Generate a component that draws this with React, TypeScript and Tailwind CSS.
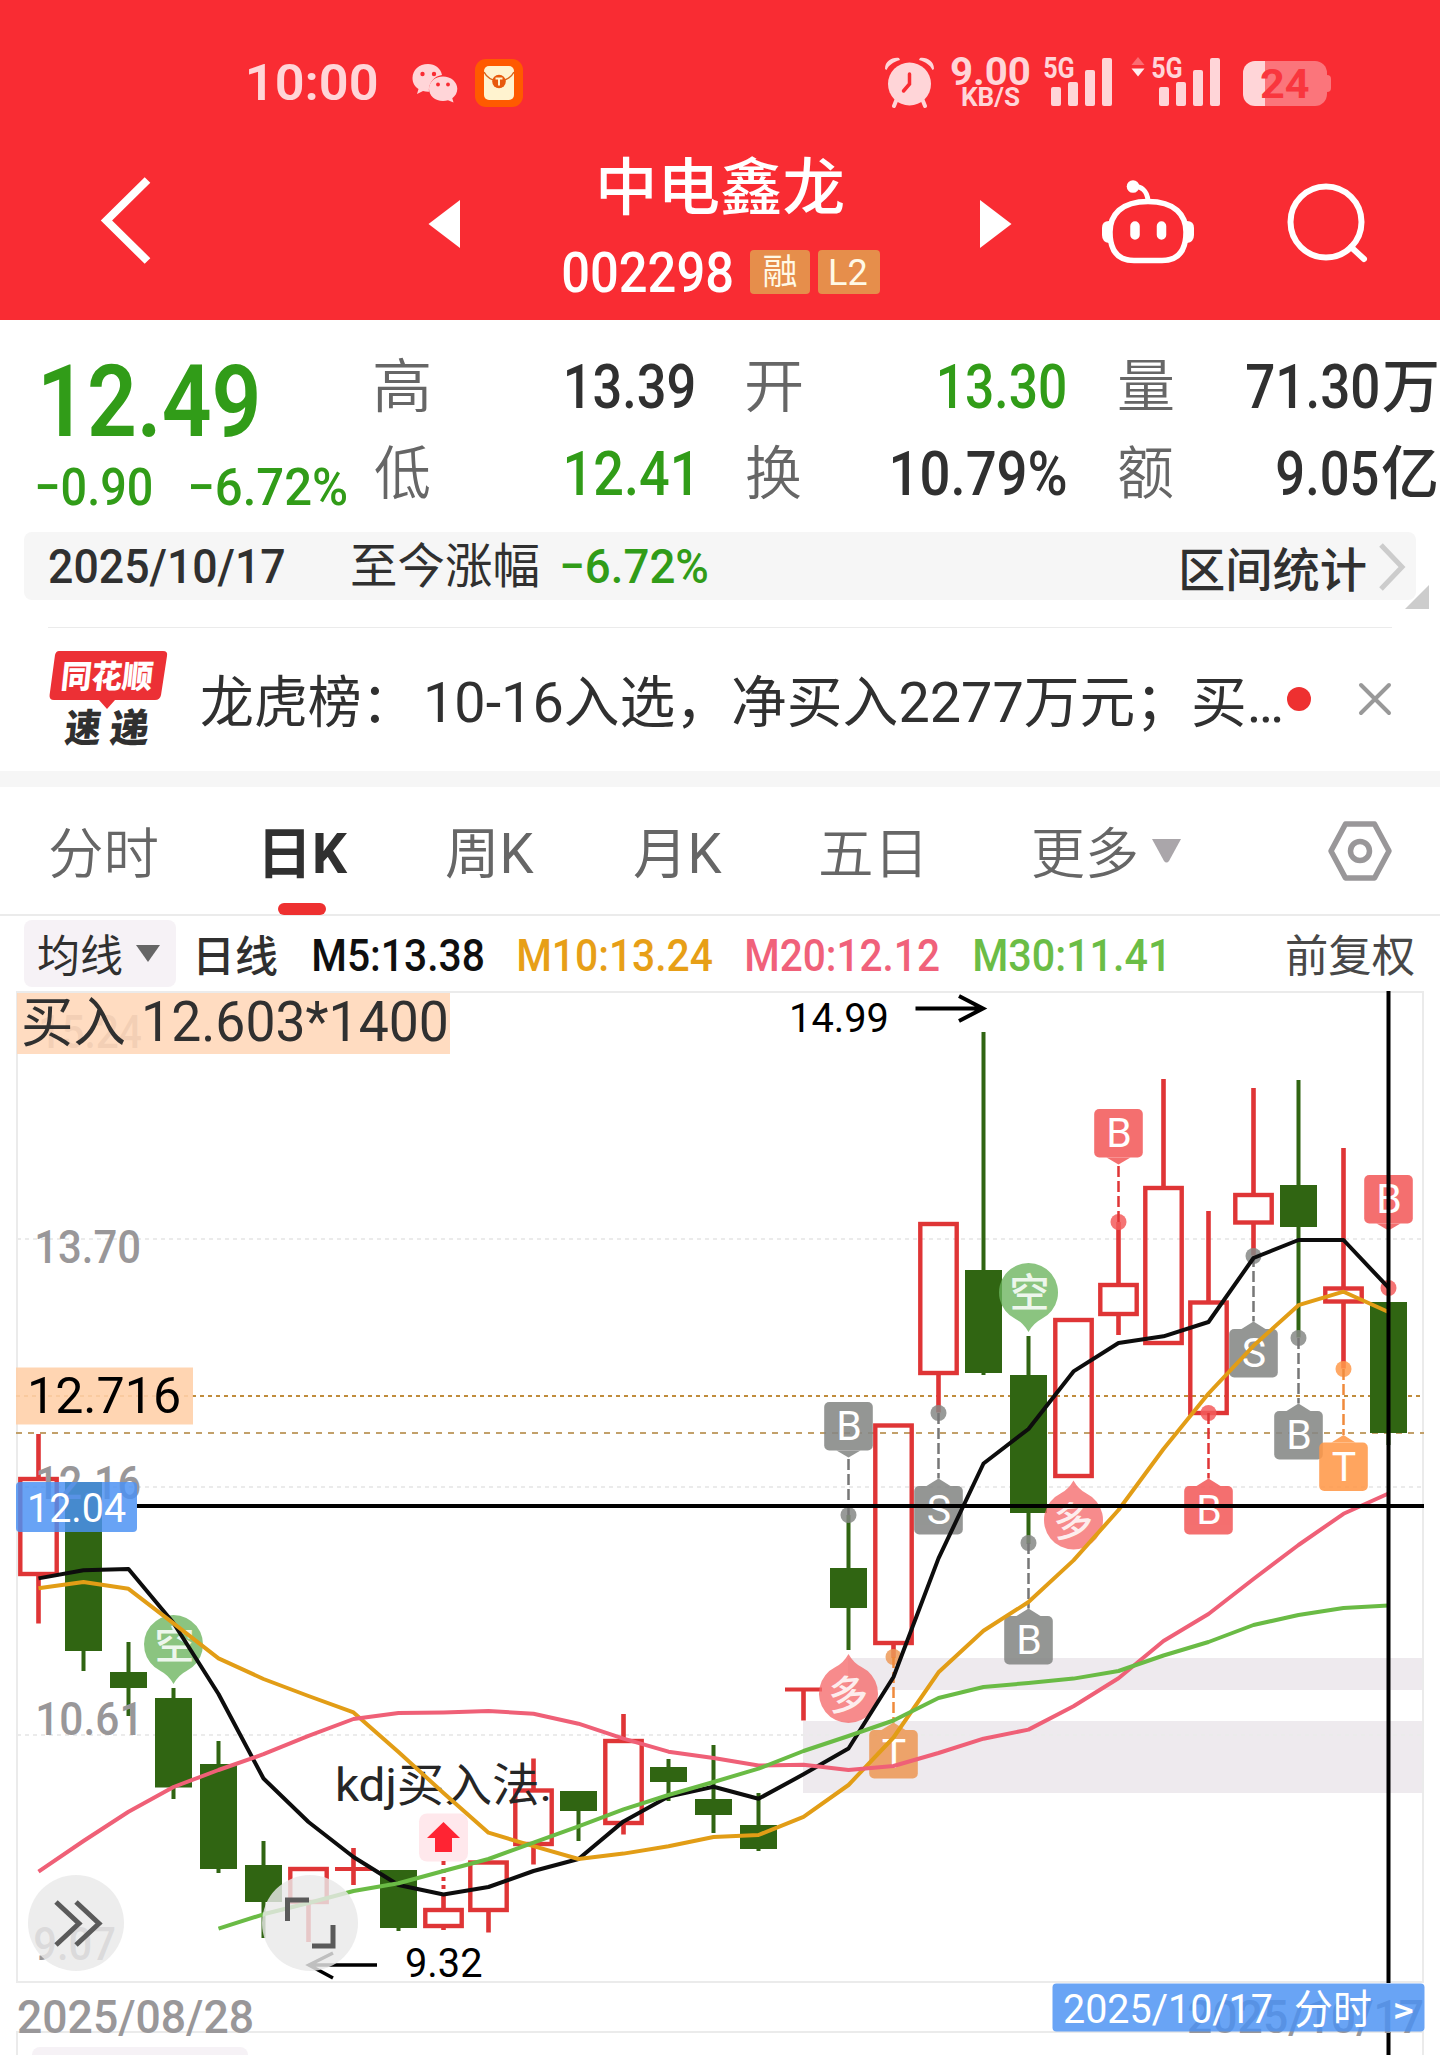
import type { ReactNode } from 'react';

const FAMILY = 'Roboto, "Noto Sans CJK SC", sans-serif';
const ctx = document.createElement('canvas').getContext('2d')!;

/* Ink extents of a run of text: distance from the origin to its left and right edges. */
function ink(text: string, size: number, weight: number) {
  ctx.font = `${weight} ${size}px ${FAMILY}`;
  const m = ctx.measureText(text);
  return { left: m.actualBoundingBoxLeft, width: m.actualBoundingBoxLeft + m.actualBoundingBoxRight };
}

/* A run of text whose ink is condensed to exactly `w` pixels. */
function Fit({ t, w, size, weight = 400, className = '' }: { t: string; w: number; size: number; weight?: number; className?: string }) {
  const m = ink(t, size, weight);
  const s = w / m.width;
  return (
    <span className={`block shrink-0 whitespace-nowrap leading-none ${className}`} style={{ width: w, fontSize: size, fontWeight: weight }}>
      <span className="inline-block origin-left whitespace-pre align-top" style={{ transform: `translateX(${m.left * s}px) scaleX(${s})` }}>
        {t}
      </span>
    </span>
  );
}

/* The same for labels inside the chart; (x, y) is the ink's left edge and the baseline. */
function Label({ t, x, y, w, size, weight = 400, fill, opacity = 1 }: { t: string; x: number; y: number; w: number; size: number; weight?: number; fill: string; opacity?: number }) {
  const m = ink(t, size, weight);
  const s = w / m.width;
  return (
    <text transform={`translate(${x + m.left * s} ${y}) scale(${s} 1)`} fontSize={size} fontWeight={weight} fill={fill} opacity={opacity} fontFamily={FAMILY} style={{ whiteSpace: 'pre' }}>
      {t}
    </text>
  );
}

function Bars() {
  return (
    <svg className="ml-[7px] mt-[1px] block" width="61" height="48" viewBox="0 0 61 48" fill="#ffd5d8">
      <rect x="0" y="29" width="10" height="19" rx="2" />
      <rect x="17" y="24" width="10" height="24" rx="2" />
      <rect x="34" y="12" width="10" height="36" rx="2" />
      <rect x="51" y="0" width="10" height="48" rx="2" />
    </svg>
  );
}

function Signal() {
  return (
    <div className="relative h-[50px] w-[69px]">
      <div className="absolute left-0 top-[-4px]">
        <Fit t="5G" w={30} size={29} weight={700} />
      </div>
      <Bars />
    </div>
  );
}

function StatusBar() {
  return (
    <div className="flex h-[127px] items-start pt-[57px] text-[#ffd5d8]">
      <Fit t="10:00" w={128} size={50} weight={600} className="ml-[249px] mt-[1px]" />
      <svg className="ml-[35px] mt-[6px] block" width="46" height="40" viewBox="0 0 46 40">
        <path d="M16 1C7 1 .5 7 .5 15c0 5 2.300 8.500 6 11l-1.500 5 6-3c2 .6 4 .8 6 .7A15 15 0 0 1 30 12C29 5.500 23 1 16 1Z" fill="#ffd5d8" />
        <path d="M31 13.500c-8 0-14 5.500-14 12.200 0 6.900 6 12.300 14 12.300 1.700 0 3.500-.3 5-.8l5.500 2.300-1.200-4.300c3-2.300 5-5.500 5-9.500 0-6.700-6.300-12.200-14.300-12.200Z" fill="#ffd5d8" />
        <g fill="#f92c33"><circle cx="10.500" cy="11" r="2.200" /><circle cx="22" cy="11" r="2.200" /><circle cx="26" cy="21.500" r="1.900" /><circle cx="36" cy="21.500" r="1.900" /></g>
      </svg>
      <svg className="ml-[17px] mt-[2px] block" width="48" height="48" viewBox="0 0 48 48">
        <rect width="48" height="48" rx="11" fill="#ff5a00" />
        <rect x="9" y="7" width="30" height="34" rx="5" fill="#fff3cf" />
        <path d="M9 13Q13 21 24 22.500Q35 21 39 13" fill="none" stroke="#d9641a" strokeWidth="1.500" />
        <circle cx="24" cy="22.500" r="6.800" fill="#e8590c" />
        <path d="M20.500 19.500h7M24 19.500v7" stroke="#fff3cf" strokeWidth="2" />
      </svg>
      <svg className="ml-[362px] block" width="49" height="51" viewBox="0 0 49 51">
        <circle cx="24.500" cy="27" r="21.500" fill="#ffd5d8" />
        <path d="M0 12C0 4 7 0 14 1L15 3C8 5 4 8 1.500 13ZM49 12C49 4 42 0 35 1L34 3C41 5 45 8 47.500 13Z" fill="#ffd5d8" />
        <path d="M11 44L9 49M38 44L40 49" stroke="#ffd5d8" strokeWidth="4" strokeLinecap="round" />
        <path d="M24.500 17V27L18.500 34" fill="none" stroke="#f92c33" strokeWidth="3.500" strokeLinecap="round" />
      </svg>
      <div className="-mt-[4px] ml-[17px] flex w-[79px] flex-col items-center">
        <Fit t="9.00" w={79} size={38} weight={700} />
        <Fit t="KB/S" w={58} size={26} weight={700} className="-mt-[7px]" />
      </div>
      <div className="ml-[14px]"><Signal /></div>
      <svg className="ml-[18px] block" width="14" height="20" viewBox="0 0 14 20">
        <path d="M7 0L13.500 8H.5Z" fill="#fb6c72" />
        <path d="M7 19.500L.5 11.500h13Z" fill="#fff0f0" />
      </svg>
      <div className="ml-[7px]"><Signal /></div>
      <div className="relative ml-[22px] mt-[4px] flex h-[45px] w-[90px] items-start">
        <div className="h-full w-[22px] rounded-l-[12px] bg-[#ffd5d8]" />
        <div className="h-full w-[62px] rounded-r-[12px] bg-[#fb757b]" />
        <div className="mt-[14px] h-[17px] w-[4px] shrink-0 rounded-r-[4px] bg-[#fb757b]" />
        <div className="absolute left-[18px] top-[3px] text-[#f9363e]">
          <Fit t="24" w={48} size={41} weight={700} />
        </div>
      </div>
    </div>
  );
}

function Header() {
  return (
    <header className="h-[320px] bg-[#f92c33]">
      <StatusBar />
      <div className="flex h-[193px] items-start text-white">
        <svg className="ml-[100px] mt-[48px] block" width="54" height="92" viewBox="0 0 54 92">
          <path d="M47.500 5L6.500 45.500L47.500 86" fill="none" stroke="#fff" strokeWidth="8" />
        </svg>
        <svg className="ml-[274px] mt-[73px] block" width="32" height="48"><path d="M32 0V48L.5 24Z" fill="#fff" /></svg>
        <div className="ml-[101px] flex w-[319px] flex-col pt-[31px]">
          <Fit t="中电鑫龙" w={243} size={62} weight={500} className="ml-[39px]" />
          <div className="mt-[26px] flex items-start">
            <Fit t="002298" w={169} size={55} weight={500} className="ml-[2px]" />
            <div className="ml-[18px] mt-[4px] flex h-[44px] w-[60px] items-center justify-center rounded-[4px] bg-[#e68e4b] text-[#fff9e6]">
              <Fit t="融" w={33} size={35} />
            </div>
            <div className="ml-[8px] mt-[4px] flex h-[44px] w-[62px] items-center justify-center rounded-[4px] bg-[#e68e4b] text-[#fff9e6]">
              <Fit t="L2" w={36} size={37} />
            </div>
          </div>
        </div>
        <svg className="ml-[100px] mt-[73px] block" width="32" height="48"><path d="M0 0V48L31.500 24Z" fill="#fff" /></svg>
        <svg className="ml-[88px] mt-[51px] block" width="96" height="88" viewBox="0 0 96 88" fill="none" stroke="#fff">
          <path d="M32 9C41 7 47.500 13 48 23" strokeWidth="5" />
          <circle cx="33" cy="8.500" r="6.300" fill="#fff" stroke="none" />
          <path d="M48 23.500C75 23.500 86 37 86 54C86 74 77 82.500 62 82.500H34C19 82.500 10 74 10 54C10 37 21 23.500 48 23.500Z" strokeWidth="5.500" />
          <path d="M9 43q-7 0-7 7v7q0 7 7 8ZM87 43q7 0 7 7v7q0 7-7 8Z" fill="#fff" stroke="none" />
          <path d="M35 48v9M61.500 48v9" strokeWidth="9.500" strokeLinecap="round" />
        </svg>
        <svg className="ml-[88px] mt-[55px] block" width="84" height="84" viewBox="0 0 84 84" fill="none" stroke="#fff" strokeWidth="6">
          <circle cx="42" cy="40" r="35.500" />
          <path d="M67 65L80 77" strokeLinecap="round" />
        </svg>
      </div>
    </header>
  );
}

function Quote() {
  return (
    <section className="flex h-[212px] items-start">
      <div className="w-[373px] pt-[32px] text-[#319c18]">
        <Fit t="12.49" w={213} size={100} weight={600} className="ml-[44px]" />
        <div className="mt-[10px] flex">
          <Fit t="−0.90" w={114} size={52} weight={500} className="ml-[37px]" />
          <Fit t="−6.72%" w={156} size={52} weight={500} className="ml-[39px]" />
        </div>
      </div>
      <div className="grid grid-cols-[372px_372px_323px] grid-rows-[87px_87px] pt-[24px] text-[#303030]">
        <div className="flex h-[86px] items-center">
          <Fit t="高" w={54} size={58} weight={350} className="ml-[2px] text-[#666]" />
          <Fit t="13.39" w={127} size={61} weight={500} className="ml-[138px]" />
        </div>
        <div className="flex h-[86px] items-center">
          <Fit t="开" w={54} size={58} weight={350} className="ml-[2px] text-[#666]" />
          <Fit t="13.30" w={125} size={61} weight={500} className="ml-[139px] text-[#319c18]" />
        </div>
        <div className="flex h-[86px] items-center">
          <Fit t="量" w={54} size={58} weight={350} className="ml-[2px] text-[#666]" />
          <Fit t="71.30" w={131} size={61} weight={500} className="ml-[74px]" />
          <Fit t="万" w={54} size={58} weight={450} className="ml-[5px]" />
        </div>
        <div className="flex h-[86px] items-center">
          <Fit t="低" w={54} size={58} weight={350} className="ml-[2px] text-[#666]" />
          <Fit t="12.41" w={123} size={61} weight={500} className="ml-[138px] text-[#319c18]" />
        </div>
        <div className="flex h-[86px] items-center">
          <Fit t="换" w={54} size={58} weight={350} className="ml-[2px] text-[#666]" />
          <Fit t="10.79%" w={173} size={61} weight={500} className="ml-[92px]" />
        </div>
        <div className="flex h-[86px] items-center">
          <Fit t="额" w={54} size={58} weight={350} className="ml-[2px] text-[#666]" />
          <Fit t="9.05" w={101} size={61} weight={500} className="ml-[104px]" />
          <Fit t="亿" w={54} size={58} weight={450} className="ml-[4px]" />
        </div>
      </div>
    </section>
  );
}

function RangeBar() {
  return (
    <section className="relative mx-[24px] flex h-[68px] items-center rounded-[8px] bg-[#f6f6f6] text-[#303030]">
      <Fit t="2025/10/17" w={235} size={49} weight={500} className="ml-[25px]" />
      <Fit t="至今涨幅" w={186} size={48} className="ml-[68px] mt-[1px]" />
      <Fit t="−6.72%" w={145} size={49} weight={500} className="ml-[24px] text-[#319c18]" />
      <Fit t="区间统计" w={184} size={47} weight={450} className="ml-[475px] mt-[8px]" />
      <svg className="ml-[12px] mt-[2px] block" width="28" height="50" viewBox="0 0 28 50"><path d="M3 3L24 25L3 47" fill="none" stroke="#ccc" strokeWidth="5" /></svg>
      <svg className="absolute -bottom-[9px] -right-[13px]" width="24" height="24"><path d="M24 0V24H0Z" fill="#ccc" /></svg>
    </section>
  );
}

function News() {
  return (
    <section className="mx-[48px] mt-[27px] flex h-[144px] items-start border-t border-[#ebebeb]">
      <div className="relative ml-[1px] mt-[23px] h-[100px] w-[120px]">
        <svg className="absolute left-0 top-0" width="120" height="60" viewBox="0 0 120 60">
          <path d="M10 0H114Q119 0 118 5L112 44Q111 49 106 49H66L58 58L50 49H5Q0 49 .6 44L6 4Q7 0 10 0Z" fill="#ec3035" />
        </svg>
        <div className="absolute left-[14px] top-[10px] -skew-x-6 text-white"><Fit t="同花顺" w={89} size={32} weight={900} /></div>
        <div className="absolute left-[16px] top-[59px] -skew-x-6 text-[#303030]"><Fit t="速" w={36} size={39} weight={900} /></div>
        <div className="absolute left-[61px] top-[59px] -skew-x-6 text-[#303030]"><Fit t="递" w={39} size={39} weight={900} /></div>
      </div>
      <Fit t="龙虎榜：" w={179} size={55.5} className="ml-[33px] mt-[48px] text-[#303030]" />
      <Fit t="10-16入选，净买入2277万元；买…" w={854} size={55.5} className="ml-[47px] mt-[48px] text-[#303030]" />
      <div className="ml-[6px] mt-[59px] size-[24px] shrink-0 rounded-full bg-[#ee3030]" />
      <svg className="ml-[47px] mt-[54px] block shrink-0" width="34" height="34"><path d="M3 3L31 31M31 3L3 31" stroke="#999" strokeWidth="4" strokeLinecap="round" /></svg>
    </section>
  );
}

function Tabs() {
  return (
    <nav className="flex h-[129px] items-start border-b-2 border-[#ebebeb] pt-[40px] text-[#666]">
      <Fit t="分时" w={107} size={55} weight={350} className="ml-[50px]" />
      <div className="ml-[108px] w-[83px]">
        <Fit t="日K" w={83} size={55} weight={700} className="text-[#303030]" />
        <div className="ml-[13px] mt-[21px] h-[12px] w-[48px] rounded-full bg-[#ee3030]" />
      </div>
      <Fit t="周K" w={88} size={55} weight={400} className="ml-[98px]" />
      <Fit t="月K" w={88} size={55} weight={400} className="ml-[100px]" />
      <Fit t="五日" w={99} size={55} weight={350} className="ml-[99px]" />
      <Fit t="更多" w={103} size={55} weight={350} className="ml-[113px]" />
      <svg className="ml-[16px] mt-[12px] block" width="29" height="24"><path d="M0 0H29L17 22Q14.500 25 12 22Z" fill="#aaa6aa" /></svg>
      <svg className="ml-[146px] -mt-[7px] block" width="66" height="62" viewBox="0 0 66 62" fill="none" stroke="#999799" strokeLinejoin="round">
        <path d="M18.500 4H47.500L62 31L47.500 58H18.500L4 31Z" strokeWidth="5.500" />
        <circle cx="33" cy="31" r="9.500" strokeWidth="5.500" />
      </svg>
    </nav>
  );
}

function Averages() {
  return (
    <section className="flex h-[75px] items-center pb-[1px]">
      <div className="ml-[24px] flex h-[67px] w-[152px] items-center rounded-[8px] bg-[#f6f2f6] text-[#303030]">
        <Fit t="均线" w={84} size={44} className="ml-[14px] mt-[8px]" />
        <svg className="ml-[14px] block" width="24" height="17"><path d="M0 0H24L12 17Z" fill="#666" /></svg>
      </div>
      <Fit t="日线" w={78} size={43} weight={450} className="ml-[23px] mt-[8px] text-[#303030]" />
      <Fit t="M5:13.38" w={169} size={44} weight={500} className="ml-[37px] mt-[6px] text-[#0f0f0f]" />
      <Fit t="M10:13.24" w={193} size={44} weight={500} className="ml-[36px] mt-[6px] text-[#e79f17]" />
      <Fit t="M20:12.12" w={192} size={44} weight={500} className="ml-[35px] mt-[6px] text-[#f0617a]" />
      <Fit t="M30:11.41" w={189} size={44} weight={500} className="ml-[36px] mt-[6px] text-[#6bbd46]" />
      <Fit t="前复权" w={127} size={44} className="ml-[123px] mt-[8px] text-[#484848]" />
    </section>
  );
}

const cx = (i: number) => 38.5 + 45 * i;

/* [colour, wick top, body top, body bottom, wick bottom] */
type Candle = ['r' | 'g', number, number, number, number];
const candles: Candle[] = [
  ['r', 1434, 1477, 1576, 1623.5], ['g', 1482, 1482, 1651, 1671], ['g', 1642, 1672, 1688, 1716], ['g', 1688, 1698, 1787.5, 1799],
  ['g', 1741, 1764, 1869, 1873], ['g', 1841, 1865, 1902, 1938], ['r', 1867, 1867, 1904, 1942], ['r', 1848, 1867, 1871, 1885],
  ['g', 1870, 1870, 1928, 1931], ['r', 1894, 1908, 1928, 1930], ['r', 1860.5, 1860.5, 1912, 1932.5], ['r', 1758.5, 1788.5, 1846, 1864.5],
  ['g', 1791, 1791, 1811, 1841], ['r', 1714, 1739, 1825, 1834.5], ['g', 1759, 1767, 1782, 1801], ['g', 1745, 1799, 1815, 1833],
  ['g', 1793, 1825, 1849, 1851], ['r', 1687.5, 1687.5, 1691.5, 1720.5], ['g', 1515, 1568, 1608, 1650], ['r', 1423.5, 1423.5, 1645, 1658],
  ['r', 1222, 1222, 1375, 1412.5], ['g', 1032, 1270, 1373, 1375], ['g', 1336, 1375, 1513, 1544], ['r', 1318, 1318, 1478, 1478],
  ['r', 1222, 1283, 1316, 1335], ['r', 1079, 1186, 1345, 1345], ['r', 1211, 1300.5, 1415, 1415], ['r', 1088, 1193, 1224.5, 1255.5],
  ['g', 1080, 1185, 1227, 1337.5], ['r', 1148, 1286.5, 1303.5, 1368.5], ['g', 1302, 1302, 1433, 1445],
];

const ma5 = [1578.4, 1570.3, 1569, 1623, 1694, 1778.5, 1822, 1857, 1885, 1894.5, 1887, 1871, 1859, 1821.4, 1796.6, 1786.7, 1798.8, 1774.3, 1748.5, 1677, 1558.4, 1463.5, 1429, 1371.4, 1343, 1336.3, 1322, 1258, 1240, 1240, 1287.7];
const ma10 = [1588.3, 1582, 1588.8, 1623.4, 1658.4, 1679, 1696, 1712.4, 1752, 1793, 1832.7, 1846.2, 1859, 1853.6, 1846.2, 1837, 1835, 1816.8, 1785, 1737.5, 1672.3, 1630.8, 1602, 1560.4, 1510, 1449, 1393.5, 1345.8, 1305.2, 1291.7, 1312];
const ma20 = [1871.6, 1841, 1811.8, 1787, 1770, 1754.2, 1735.8, 1719, 1713, 1712.4, 1711, 1713.8, 1723.7, 1738.6, 1751.7, 1758, 1765.5, 1764.8, 1770, 1766, 1753, 1738.7, 1729.6, 1706.3, 1678.2, 1641, 1614, 1579, 1545, 1513.8, 1493.5];
const ma30 = [1928.7, 1914.3, 1903, 1891, 1883.3, 1871, 1859, 1842.7, 1826.4, 1809.4, 1795, 1782, 1768.7, 1751, 1736, 1720.5, 1698, 1687, 1683, 1678.6, 1671, 1655.5, 1642, 1625, 1615, 1608, 1605.5];

function Line({ data, color, from = 0 }: { data: number[]; color: string; from?: number }) {
  return <polyline points={data.map((y, i) => `${cx(i + from)},${y}`).join(' ')} fill="none" stroke={color} strokeWidth="4" strokeLinejoin="round" />;
}

function CandleMark({ c, i }: { c: Candle; i: number }) {
  const [k, hi, top, bot, lo] = c;
  const x = cx(i);
  if (k === 'g') {
    return (
      <g fill="#306512">
        <rect x={x - 2} y={hi} width="4" height={lo - hi} />
        <rect x={x - 18.5} y={top} width="37" height={bot - top} />
      </g>
    );
  }
  const flat = bot - top < 5;
  return (
    <g fill="#df3536">
      {hi < top && <rect x={x - 2.3} y={hi} width="4.600" height={top - hi + 1} />}
      {lo > bot && <rect x={x - 2.3} y={bot - 1} width="4.600" height={lo - bot + 1} />}
      {flat ? (
        <rect x={x - 18.5} y={top} width="37" height="4" />
      ) : (
        <rect x={x - 18.2} y={top + 2} width="36.400" height={bot - top - 4} fill="none" stroke="#df3536" strokeWidth="4.400" />
      )}
    </g>
  );
}

/* Trade badges, tied by a dashed leader to a dot on the candle; a badge hangs above or below its dot. */
function Badge({ i, dot, box, t, color, line }: { i: number; dot: number; box: number; t: string; color: string; line: string }) {
  const x = cx(i);
  const up = box < dot;
  const near = up ? box + 48.5 : box;
  const tip = up ? near + 7 : near - 7.5;
  return (
    <g>
      <circle cx={x} cy={dot} r="8" fill={color} opacity=".85" />
      <line x1={x} x2={x} y1={dot} y2={tip} stroke={line} strokeWidth="2.500" strokeDasharray="11 4" />
      <g fill={color} opacity=".88">
        <rect x={x - 24.3} y={box} width="48.600" height="48.500" rx="5" />
        <path d={`M${x - 12} ${near}L${x} ${tip}L${x + 12} ${near}Z`} />
      </g>
      <text x={x + 0.5} y={box + 38} fontSize="41" fill="#fff" textAnchor="middle" fontFamily={FAMILY}>{t}</text>
    </g>
  );
}

function Balloon({ i, y, t }: { i: number; y: number; t: '多' | '空' }) {
  const x = cx(i);
  const down = t === '空';
  const d = down ? 1 : -1;
  return (
    <g>
      <path
        d={`M${x - 13} ${y + 26 * d}A29.500 29.500 0 1 ${down ? 1 : 0} ${x + 13} ${y + 26 * d}Q${x + 5} ${y + 30 * d} ${x} ${y + 39 * d}Q${x - 5} ${y + 30 * d} ${x - 13} ${y + 26 * d}Z`}
        fill={down ? '#6ab35c' : '#f56a6c'}
        opacity=".78"
      />
      <text transform={`translate(${x + 1} ${y + (down ? 14 : 16)}) rotate(${down ? 0 : -5})`} fontSize="40" fontWeight="500" fill="#fff" opacity=".85" textAnchor="middle" fontFamily={FAMILY}>{t}</text>
    </g>
  );
}

function Chart() {
  return (
    <svg className="block" width="1440" height="1064" viewBox="0 991 1440 1064">
      <g fill="#eeeaee">
        <rect x="848" y="1658" width="576" height="32" />
        <rect x="803" y="1721" width="621" height="72" />
      </g>
      <g fill="none" stroke="#ebebeb" strokeWidth="2">
        <path d="M17 992H1423V1982H17ZM17 2055V2032H1423V2055" />
        <path d="M17 1239H1423M17 1487H1423M17 1735H1423" strokeDasharray="4 4" />
      </g>
      <rect x="32" y="2047" width="216" height="20" rx="8" fill="#f6f2f6" />
      <path d="M16 1396H1420" stroke="#c08c3c" strokeWidth="2" strokeDasharray="4 4" />
      <path d="M16 1433H1424" stroke="#c2a06a" strokeWidth="2" strokeDasharray="6 6" />

      {candles.map((c, i) => <CandleMark key={i} c={c} i={i} />)}

      <Label t="15.24" x={41} y={1048} w={100} size={46} weight={500} fill="#999799" />
      <Label t="13.70" x={37} y={1263} w={102} size={46} weight={500} fill="#999799" />
      <Label t="12.16" x={38} y={1498.5} w={102} size={46} weight={500} fill="#999799" />
      <Label t="10.61" x={38} y={1735} w={98} size={46} weight={500} fill="#999799" />
      <Label t="9.07" x={35} y={1960} w={80} size={46} weight={500} fill="#999799" />

      <Balloon i={3} y={1645} t="空" />
      <Balloon i={22} y={1293} t="空" />
      <Balloon i={18} y={1693} t="多" />
      <Balloon i={23} y={1519.5} t="多" />

      <Badge i={24} dot={1222} box={1109} t="B" color="#f35c5c" line="#df3536" />
      <Badge i={30} dot={1288} box={1175} t="B" color="#f35c5c" line="#df3536" />
      <Badge i={18} dot={1515} box={1402} t="B" color="#868886" line="#777" />
      <Badge i={20} dot={1413} box={1486} t="S" color="#868886" line="#777" />
      <Badge i={22} dot={1543} box={1616} t="B" color="#868886" line="#777" />
      <Badge i={27} dot={1256} box={1329} t="S" color="#868886" line="#777" />
      <Badge i={28} dot={1338} box={1411} t="B" color="#868886" line="#777" />
      <Badge i={29} dot={1369} box={1442.5} t="T" color="#ff994a" line="#f08a3c" />
      <Badge i={26} dot={1413} box={1486} t="B" color="#f35c5c" line="#df3536" />
      <Badge i={19} dot={1657} box={1730} t="T" color="#ed9a58" line="#f08a3c" />

      <Label t="kdj买入法." x={338} y={1801} w={211} size={46} fill="#262626" />
      <rect x="419" y="1813.500" width="49" height="48" rx="8" fill="#ffe8ec" />
      <path d="M443.500 1822L460 1838H452V1852H435V1838H427Z" fill="#ff2433" />
      <path d="M443.500 1861V1894" stroke="#df3536" strokeWidth="4" strokeDasharray="4 4" />

      <Line data={ma5} color="#0d0d0d" />
      <Line data={ma10} color="#e29d16" />
      <Line data={ma20} color="#ef6077" />
      <Line data={ma30} color="#6abb45" from={4} />

      <Label t="14.99" x={792} y={1032} w={95} size={41} fill="#000" />
      <path d="M915.500 1008.500H982M959 996L983 1008.500L959 1021" fill="none" stroke="#000" strokeWidth="4" />
      <Label t="9.32" x={406} y={1977} w={75} size={40} fill="#000" />
      <path d="M377 1965H309M333 1953L309 1965L333 1978" fill="none" stroke="#000" strokeWidth="3.500" />

      <path d="M137 1506H1424M1388.500 991V1983M1388.500 2032V2055" stroke="#000" strokeWidth="4" />

      <rect x="17" y="993" width="433" height="61" fill="#ffd7b8" opacity=".88" />
      <Label t="买入" x={23} y={1042} w={102} size={54} fill="#303030" />
      <Label t="12.603*1400" x={145} y={1041} w={301} size={55} fill="#303030" />

      <rect x="16" y="1367.500" width="177" height="57" fill="#ffd0aa" opacity=".9" />
      <Label t="12.716" x={31} y={1413} w={148} size={50} fill="#000" />
      <rect x="16" y="1482" width="121" height="50" rx="4" fill="#4b91f3" opacity=".84" />
      <Label t="12.04" x={30} y={1522} w={96} size={41} fill="#fff" />

      <g fill="#e9e9e9" opacity=".82"><circle cx="76" cy="1923" r="48" /><circle cx="310" cy="1923" r="48" /></g>
      <path d="M56 1902L79 1923.500L56 1945M76 1902L99 1923.500L76 1945" fill="none" stroke="#5a5a5a" strokeWidth="5" />
      <path d="M287.500 1921V1900H309M312 1946H333V1925" fill="none" stroke="#5a5a5a" strokeWidth="5" />

      <Label t="2025/08/28" x={18} y={2033} w={234} size={46} weight={500} fill="#999799" />
      <Label t="2025/10/17" x={1188} y={2033} w={235} size={46} weight={500} fill="#999799" />
      <rect x="1052.500" y="1983.500" width="372" height="48" rx="4" fill="#4b91f3" opacity=".83" />
      <Label t="2025/10/17" x={1064} y={2023} w={208} size={41} fill="#fff" />
      <Label t="分时" x={1295} y={2024} w={76} size={41} fill="#fff" />
      <Label t=">" x={1395} y={2022} w={18} size={36} weight={500} fill="#fff" />
    </svg>
  );
}

function Page({ children }: { children: ReactNode }) {
  return <main className="h-[2055px] w-[1440px] overflow-hidden bg-white font-[Roboto,'Noto_Sans_CJK_SC',sans-serif]">{children}</main>;
}

export default function App() {
  return (
    <Page>
      <Header />
      <Quote />
      <RangeBar />
      <News />
      <div className="h-[16px] bg-[#f6f6f6]" />
      <Tabs />
      <Averages />
      <Chart />
    </Page>
  );
}
